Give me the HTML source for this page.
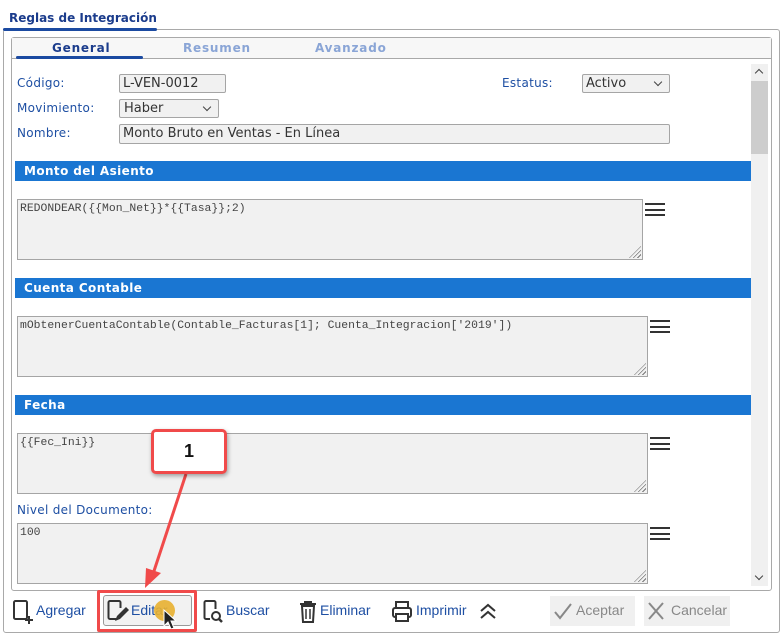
<!DOCTYPE html>
<html><head><meta charset="utf-8"><style>
*{box-sizing:border-box;margin:0;padding:0}
body{width:783px;height:635px;background:#fff;position:relative;overflow:hidden;font-family:"DejaVu Sans","Liberation Sans",sans-serif;font-size:12px;color:#1a3f99}
.a{position:absolute}
.lbl{position:absolute;font-size:12px;color:#1e4fa3;letter-spacing:.3px}
.inp{position:absolute;background:#f1f1f1;border:1px solid #a5a5a5;border-radius:2px;color:#333;font-size:13px;padding-left:3px;line-height:17px}
.bar{position:absolute;left:15px;width:736px;height:20px;background:#1a76d2;color:#fff;font-weight:bold;font-size:12px;padding-left:9px;line-height:20px;letter-spacing:.4px}
.ta{position:absolute;left:17px;background:#f1f1f1;border:1px solid #a5a5a5;font-family:"Liberation Mono",monospace;font-size:11.4px;color:#444;padding:3px 2px}
.grip{position:absolute;right:1px;bottom:1px;width:12px;height:12px;background:repeating-linear-gradient(135deg,transparent 0 2px,#777 2px 3px);clip-path:polygon(100% 0,100% 100%,0 100%)}
.ham{position:absolute;width:20px;height:13px;border-top:2px solid #333;border-bottom:2px solid #333}
.ham:after{content:"";position:absolute;left:0;right:0;top:3.5px;border-top:2px solid #333}
.tb{position:absolute;top:602px;font-size:14px;color:#1e4fa3;font-family:"Liberation Sans",sans-serif}
.sel:after{content:"";position:absolute;right:8px;top:4px;width:5px;height:5px;border-right:1.5px solid #444;border-bottom:1.5px solid #444;transform:rotate(45deg)}
</style></head><body>
<div class="a" style="left:3px;top:29px;width:777px;height:604px;border:1px solid #a9a9a9;border-radius:3px"></div>
<div class="a" style="left:3px;top:0;width:154px;height:30px;background:#fff"></div>
<div class="a" style="left:9px;top:11px;font-weight:bold;font-size:12px;color:#1b3c8c">Reglas de Integración</div>
<div class="a" style="left:3px;top:28px;width:154px;height:3px;background:#1b4aa1;border-radius:2px"></div>

<div class="a" style="left:11px;top:37px;width:761px;height:554px;border:1px solid #a9a9a9;border-radius:3px"></div>
<div class="a" style="left:12px;top:38px;width:759px;height:21px;background:#f7f7f7;border-bottom:1px solid #a9a9a9"></div>
<div class="a" style="left:52px;top:41px;font-weight:bold;color:#1b3c8c;font-size:12px;letter-spacing:.8px">General</div>
<div class="a" style="left:183px;top:41px;font-weight:bold;color:#8aa5d6;font-size:12px;letter-spacing:.8px">Resumen</div>
<div class="a" style="left:315px;top:41px;font-weight:bold;color:#8aa5d6;font-size:12px;letter-spacing:.8px">Avanzado</div>
<div class="a" style="left:16px;top:56px;width:127px;height:3px;background:#1b4aa1;border-radius:2px"></div>

<div class="a" style="left:751px;top:64px;width:17px;height:522px;background:#f0f0f0"></div>
<div class="a" style="left:751px;top:81px;width:17px;height:73px;background:#cdcdcd"></div>
<div class="a" style="left:756px;top:70px;width:6px;height:6px;border-left:1.5px solid #444;border-top:1.5px solid #444;transform:rotate(45deg)"></div>
<div class="a" style="left:756px;top:573px;width:6px;height:6px;border-right:1.5px solid #444;border-bottom:1.5px solid #444;transform:rotate(45deg)"></div>

<div class="lbl" style="left:17px;top:76px">Código:</div>
<div class="inp" style="left:119px;top:74px;width:107px;height:19px">L-VEN-0012</div>
<div class="lbl" style="left:17px;top:101px">Movimiento:</div>
<div class="inp sel" style="left:119px;top:99px;width:100px;height:19px;padding-left:4px">Haber</div>
<div class="lbl" style="left:17px;top:126px">Nombre:</div>
<div class="inp" style="left:119px;top:124px;width:551px;height:20px">Monto Bruto en Ventas - En Línea</div>
<div class="lbl" style="left:502px;top:76px">Estatus:</div>
<div class="inp sel" style="left:582px;top:74px;width:88px;height:19px">Activo</div>

<div class="bar" style="top:161px">Monto del Asiento</div>
<div class="ta" style="top:199px;width:626px;height:61px">REDONDEAR({{Mon_Net}}*{{Tasa}};2)<div class="grip"></div></div>
<div class="ham" style="left:645px;top:203px"></div>

<div class="bar" style="top:278px">Cuenta Contable</div>
<div class="ta" style="top:316px;width:631px;height:61px">mObtenerCuentaContable(Contable_Facturas[1]; Cuenta_Integracion['2019'])<div class="grip"></div></div>
<div class="ham" style="left:650px;top:320px"></div>

<div class="bar" style="top:395px">Fecha</div>
<div class="ta" style="top:433px;width:631px;height:61px">{{Fec_Ini}}<div class="grip"></div></div>
<div class="ham" style="left:650px;top:437px"></div>

<div class="lbl" style="left:17px;top:503px">Nivel del Documento:</div>
<div class="ta" style="top:523px;width:631px;height:61px">100<div class="grip"></div></div>
<div class="ham" style="left:650px;top:527px"></div>

<svg class="a" style="left:12px;top:599px" width="22" height="26" viewBox="0 0 22 26"><rect x="2" y="2" width="13" height="18" rx="1.5" fill="none" stroke="#333" stroke-width="2"/><path d="M17 17v8M13 21h8" stroke="#333" stroke-width="2"/></svg>
<div class="tb" style="left:36px">Agregar</div>
<div class="a" style="left:103px;top:595px;width:89px;height:31px;border:1px solid #999;border-radius:3px;background:#f2f2f2"></div>
<svg class="a" style="left:106px;top:599px" width="24" height="26" viewBox="0 0 24 26"><path d="M11 20H4a1.5 1.5 0 0 1-1.5-1.5V3.5A1.5 1.5 0 0 1 4 2h9a1.5 1.5 0 0 1 1.5 1.5V9" fill="none" stroke="#333" stroke-width="2"/><path d="M9 22l2-5 9-9 3 3-9 9z" fill="#333"/></svg>
<div class="tb" style="left:131px">Editar</div>
<div class="a" style="left:154px;top:600px;width:21px;height:21px;border-radius:50%;background:#e8b030;opacity:.9"></div>
<svg class="a" style="left:163px;top:609px" width="14" height="22" viewBox="0 0 14 22"><path d="M1 1v16l4-4 3 7 3-1-3-7h5z" fill="#222" stroke="#fff" stroke-width="1"/></svg>
<svg class="a" style="left:202px;top:599px" width="24" height="26" viewBox="0 0 24 26"><path d="M8 20H4a1.5 1.5 0 0 1-1.5-1.5V3.5A1.5 1.5 0 0 1 4 2h8a1.5 1.5 0 0 1 1.5 1.5V10" fill="none" stroke="#333" stroke-width="2"/><circle cx="14" cy="17" r="4" fill="none" stroke="#333" stroke-width="2"/><path d="M17 20l3 3" stroke="#333" stroke-width="2.5"/></svg>
<div class="tb" style="left:226px">Buscar</div>
<svg class="a" style="left:298px;top:600px" width="20" height="24" viewBox="0 0 20 24"><path d="M2 4h16M7 4V2h6v2" fill="none" stroke="#333" stroke-width="2"/><path d="M4 6h12l-1 16H5z" fill="none" stroke="#333" stroke-width="2"/><path d="M8 9v10M12 9v10" stroke="#333" stroke-width="1.5"/></svg>
<div class="tb" style="left:320px">Eliminar</div>
<svg class="a" style="left:391px;top:600px" width="22" height="24" viewBox="0 0 22 24"><rect x="5" y="2" width="12" height="6" fill="none" stroke="#333" stroke-width="2"/><rect x="2" y="8" width="18" height="9" rx="2" fill="none" stroke="#333" stroke-width="2"/><rect x="5" y="14" width="12" height="7" fill="#fff" stroke="#333" stroke-width="2"/></svg>
<div class="tb" style="left:416px">Imprimir</div>
<svg class="a" style="left:478px;top:602px" width="20" height="18" viewBox="0 0 20 18"><path d="M3 9l7-6 7 6M3 16l7-6 7 6" fill="none" stroke="#333" stroke-width="2"/></svg>
<div class="a" style="left:550px;top:596px;width:85px;height:30px;background:#f0f0f0"></div>
<svg class="a" style="left:553px;top:602px" width="20" height="18" viewBox="0 0 20 18"><path d="M2 10l5 6L18 2" fill="none" stroke="#888" stroke-width="2"/></svg>
<div class="tb" style="left:576px;color:#888">Aceptar</div>
<div class="a" style="left:644px;top:596px;width:86px;height:30px;background:#f0f0f0"></div>
<svg class="a" style="left:647px;top:601px" width="18" height="20" viewBox="0 0 18 20"><path d="M2 2l14 16M16 2L2 18" stroke="#888" stroke-width="2"/></svg>
<div class="tb" style="left:671px;color:#888">Cancelar</div>

<div class="a" style="left:97px;top:590px;width:100px;height:42px;border:3px solid #f04a4a;border-radius:2px"></div>
<svg class="a" style="left:0;top:0" width="783" height="635"><line x1="186" y1="474" x2="153" y2="574" stroke="#f04a4a" stroke-width="3"/><path d="M145 588l1-20 15 5z" fill="#f04a4a"/></svg>
<div class="a" style="left:151px;top:429px;width:76px;height:45px;background:#fff;border:3px solid #f04a4a;border-radius:5px;box-shadow:1px 2px 4px rgba(0,0,0,.35);text-align:center;font-family:'Liberation Sans',sans-serif;font-weight:bold;font-size:18px;color:#111;line-height:39px">1</div>
</body></html>
